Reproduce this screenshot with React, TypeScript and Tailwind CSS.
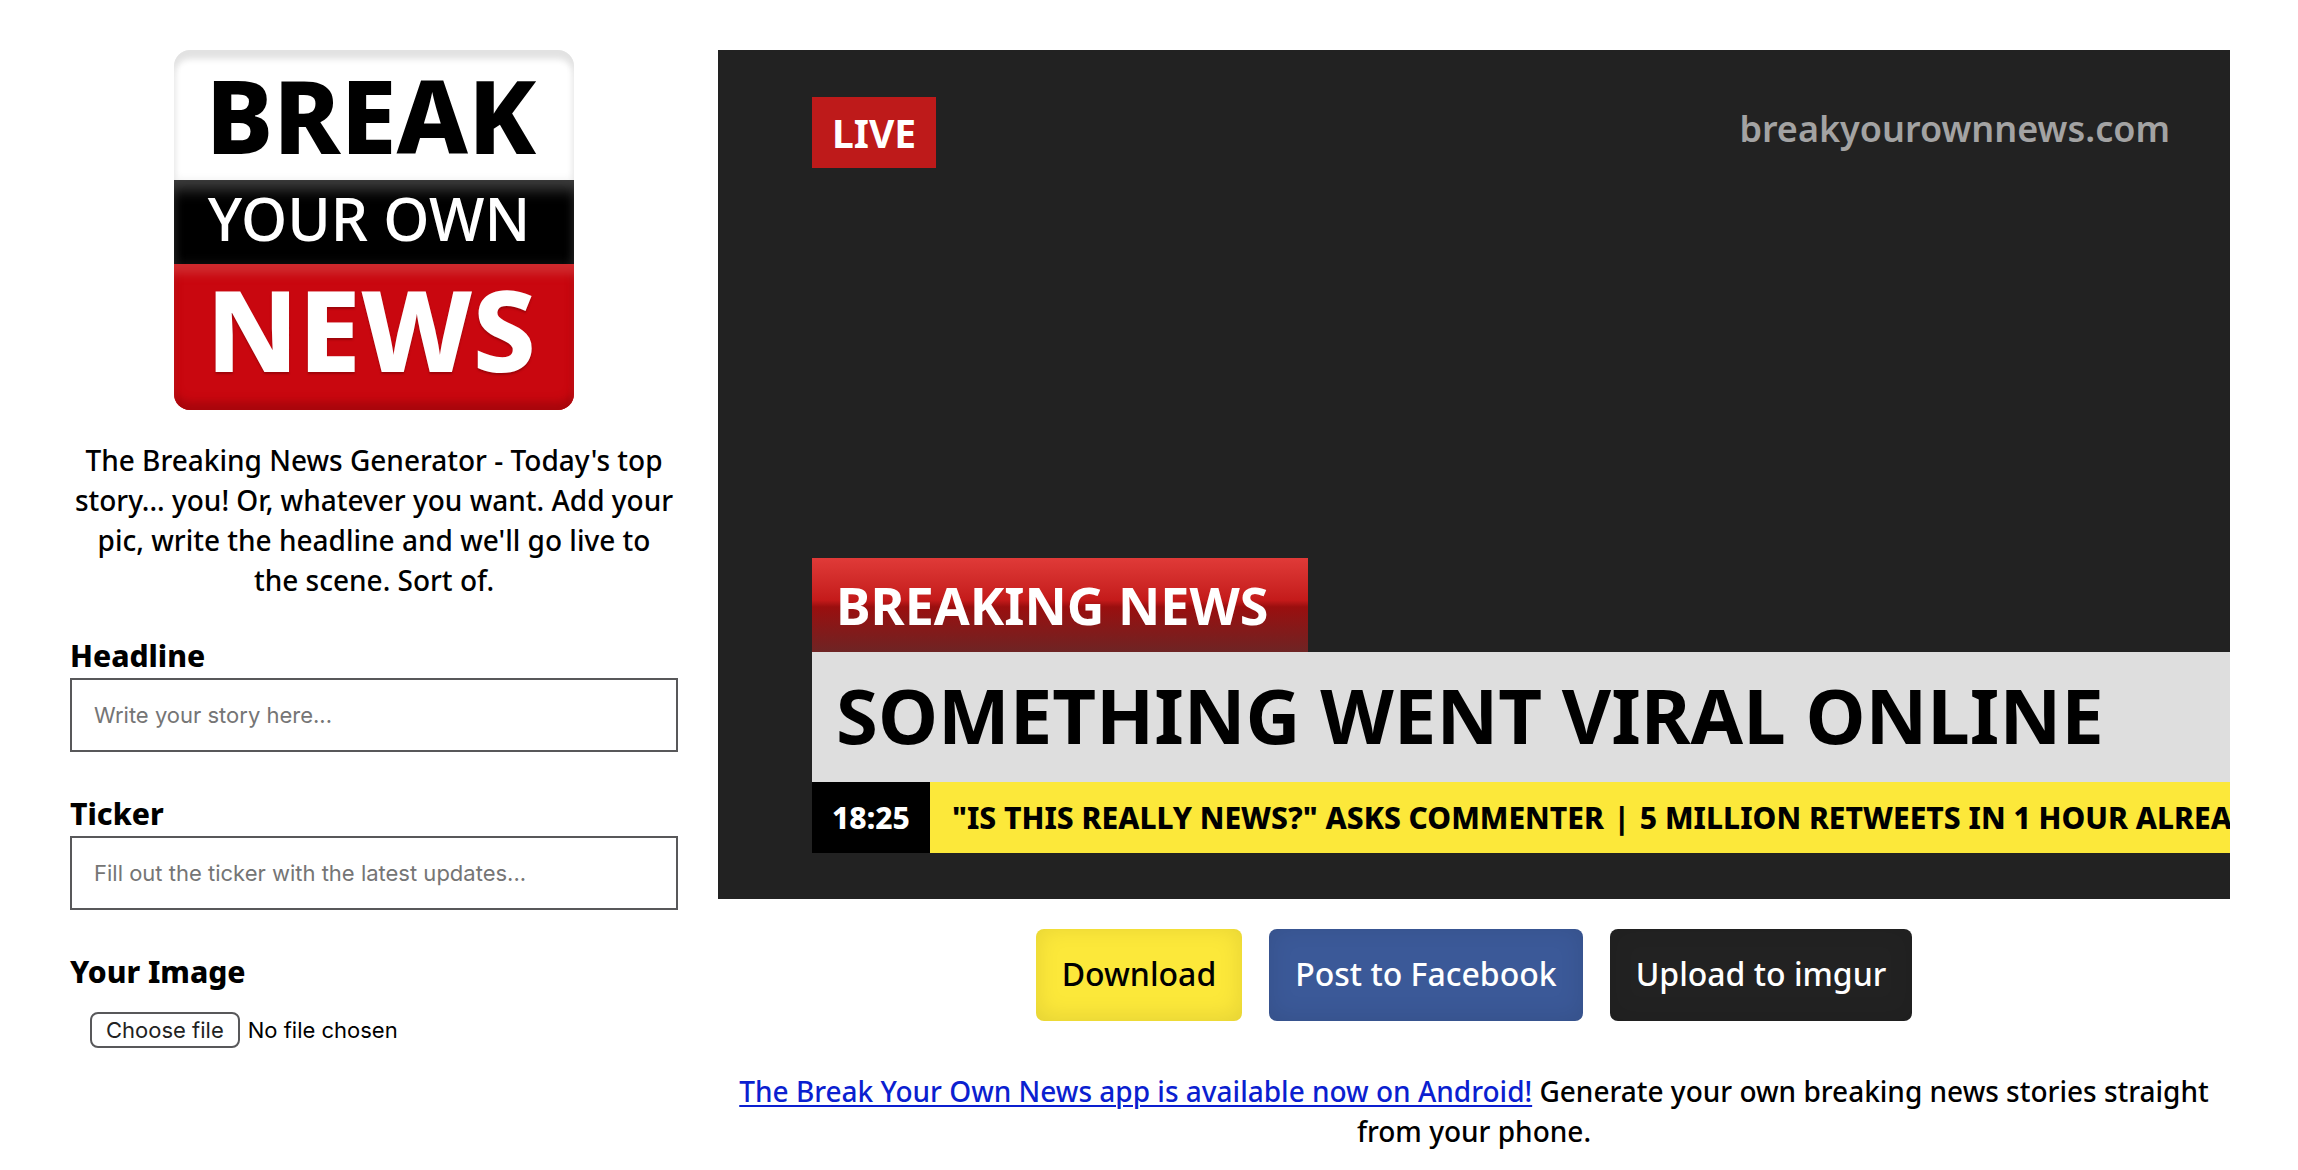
import { useRef, useState, type InputHTMLAttributes } from 'react';

const DEFAULT_HEADLINE = 'SOMETHING WENT VIRAL ONLINE';
const DEFAULT_TICKER = ['"IS THIS REALLY NEWS?" ASKS COMMENTER', '|', '5 MILLION RETWEETS IN 1 HOUR ALREA'];

export default function App() {
  const [headline, setHeadline] = useState('');
  const [ticker, setTicker] = useState('');

  return (
    <div className="min-h-screen bg-white pt-[50px] pr-[68px] pl-[70px] font-['Noto_Sans',sans-serif] text-[28px] leading-10 font-medium text-black">
      <div className="grid grid-cols-[608fr_1512fr] items-start gap-10">
        <aside className="min-w-0">
          <Logo />
          <p className="mt-[30px] px-0.5 text-center">
            The Breaking News Generator - Today's top story... you! Or, whatever you want. Add your pic, write the
            headline and we'll go live to the scene. Sort of.
          </p>
          <form className="mt-9 flex flex-col gap-10">
            <TextField
              id="headline"
              label="Headline"
              placeholder="Write your story here..."
              value={headline}
              onChange={(event) => setHeadline(event.target.value)}
            />
            <TextField
              id="ticker"
              label="Ticker"
              placeholder="Fill out the ticker with the latest updates..."
              value={ticker}
              onChange={(event) => setTicker(event.target.value)}
            />
            <ImagePicker />
          </form>
        </aside>

        <main className="min-w-0">
          <NewsScreen headline={headline} ticker={ticker} />
          <div className="mt-[30px] flex justify-center gap-[27px] text-[32px]">
            <button type="button" className="h-[92px] rounded-lg bg-[#fce83a] px-[26px] pb-0.5 shadow-[inset_0_-3px_24px_rgba(0,0,0,0.1)]">
              Download
            </button>
            <button type="button" className="h-[92px] rounded-lg bg-[#3b5998] px-[26px] pb-0.5 text-white shadow-[inset_0_-3px_24px_rgba(0,0,0,0.1)]">
              Post to Facebook
            </button>
            <button type="button" className="h-[92px] rounded-lg bg-[#222222] px-[26px] pb-0.5 text-white shadow-[inset_0_-3px_24px_rgba(0,0,0,0.1)]">
              Upload to imgur
            </button>
          </div>
          <p className="mt-[50px] text-center">
            <a href="#android" className="text-[#0b1fd0] underline decoration-2 underline-offset-3">
              The Break Your Own News app is available now on Android!
            </a>{' '}
            Generate your own breaking news stories straight from your phone.
          </p>
        </main>
      </div>
    </div>
  );
}

function Logo() {
  return (
    <h1 className="mx-auto w-[400px] text-center whitespace-nowrap">
      <span className="flex h-[130px] items-center justify-center rounded-t-2xl bg-white pr-1.5 text-[101px] leading-none font-extrabold shadow-[inset_0_9px_6px_#e2e2e2,inset_0_0_8px_#eeeeee]">
        BREAK
      </span>
      <span className="flex h-[84px] items-center justify-center bg-black pr-2.5 pb-2 text-[59px] leading-none font-medium text-white shadow-[inset_0_14px_14px_-4px_#3c3c3c,inset_0_0_12px_#161616]">
        YOUR OWN
      </span>
      <span className="flex h-[146px] items-center justify-center rounded-b-2xl bg-[#c9070f] pr-1.5 pb-4 text-[112px] leading-none font-extrabold text-white shadow-[inset_0_13px_10px_-3px_#cf2a2e,inset_0_-8px_8px_#a8060c] text-shadow-[0_2px_2px_rgba(90,0,0,0.4)]">
        NEWS
      </span>
    </h1>
  );
}

interface TextFieldProps extends InputHTMLAttributes<HTMLInputElement> {
  id: string;
  label: string;
}

function TextField({ id, label, ...inputProps }: TextFieldProps) {
  return (
    <div>
      <label htmlFor={id} className="mb-0.5 block text-[30px] font-extrabold">
        {label}
      </label>
      <input
        id={id}
        type="text"
        className="mb-0.5 block h-[74px] w-full border-2 border-[#58585a] bg-white px-[22px] font-['Inter',sans-serif] text-[22px] font-normal placeholder:text-[#757575]"
        {...inputProps}
      />
    </div>
  );
}

function ImagePicker() {
  const inputRef = useRef<HTMLInputElement>(null);
  const [fileName, setFileName] = useState('');

  return (
    <div>
      <label htmlFor="image" className="block text-[30px] font-extrabold">
        Your Image
      </label>
      <input
        ref={inputRef}
        id="image"
        type="file"
        accept="image/*"
        className="hidden"
        onChange={(event) => setFileName(event.target.files?.[0]?.name ?? '')}
      />
      <div className="mt-5 ml-5 flex items-center gap-2 font-['Inter',sans-serif] text-[22px] leading-8 font-normal">
        <button
          type="button"
          className="rounded-lg border-2 border-[#58585a] bg-white px-3.5 text-[#222222]"
          onClick={() => inputRef.current?.click()}
        >
          Choose file
        </button>
        <span>{fileName || 'No file chosen'}</span>
      </div>
    </div>
  );
}

function NewsScreen({ headline, ticker }: { headline: string; ticker: string }) {
  return (
    <section className="flex aspect-[1512/849] flex-col justify-between overflow-hidden bg-[#222222] pt-[47px] pb-[46px] pl-[94px] font-bold whitespace-nowrap">
      <div className="flex items-start justify-between pr-[60px]">
        <span className="flex h-[71px] items-center bg-[#be1a1a] px-5 text-[39px] text-white">LIVE</span>
        <span className="mt-3 text-[36px] font-semibold text-[#a3a3a3]">breakyourownnews.com</span>
      </div>

      <div>
        <div className="flex">
          <span className="bg-linear-to-b from-[#e03a38] from-0% via-[#c41a1a] via-45% to-[#9a0f0f] to-52% text-[52px] text-white">
            <span className="flex h-[94px] items-center bg-linear-to-b from-transparent from-52% to-[#6e2424] pr-10 pl-6">
              BREAKING NEWS
            </span>
          </span>
        </div>
        <h2 className="flex h-[130px] items-center bg-[#dedede] pb-1 pl-6 text-[76px]">
          {headline || DEFAULT_HEADLINE}
        </h2>
        <div className="flex h-[71px] bg-[#fce83a] text-[30px] font-extrabold">
          <time className="flex items-center bg-black px-5 text-white">18:25</time>
          <div className="flex items-center gap-2.5 pl-[22px]">
            {ticker ? <span>{ticker}</span> : DEFAULT_TICKER.map((item) => <span key={item}>{item}</span>)}
          </div>
        </div>
      </div>
    </section>
  );
}
